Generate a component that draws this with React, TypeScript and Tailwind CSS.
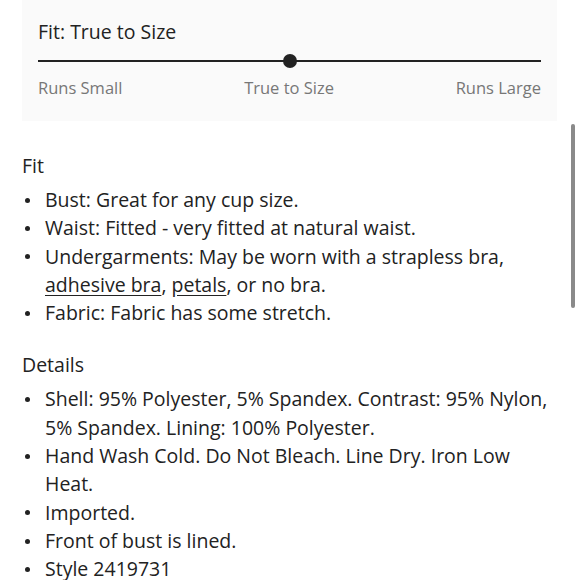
import React from 'react';

const fitItems: React.ReactNode[] = [
  'Bust: Great for any cup size.',
  'Waist: Fitted - very fitted at natural waist.',
  <>
    Undergarments: May be worn with a strapless bra,{' '}
    <span className="underline underline-offset-[3px]">adhesive bra</span>,{' '}
    <span className="underline underline-offset-[3px]">petals</span>, or no bra.
  </>,
  'Fabric: Fabric has some stretch.',
];

const detailItems: React.ReactNode[] = [
  'Shell: 95% Polyester, 5% Spandex. Contrast: 95% Nylon, 5% Spandex. Lining: 100% Polyester.',
  'Hand Wash Cold. Do Not Bleach. Line Dry. Iron Low Heat.',
  'Imported.',
  'Front of bust is lined.',
  'Style 2419731',
];

function BulletList({ items }: { items: React.ReactNode[] }) {
  return (
    <ul className="mt-[7px]">
      {items.map((item, i) => (
        <li key={i} className="flex text-[19.5px] leading-[28.3px] text-[#222]">
          <span className="flex h-[28.3px] w-[23px] shrink-0 items-center pl-[3px]">
            <span className="h-[5px] w-[5px] rounded-full bg-[#222]" />
          </span>
          <span>{item}</span>
        </li>
      ))}
    </ul>
  );
}

export default function App() {
  return (
    <div className="relative h-[580px] w-[580px] overflow-hidden bg-white font-['Open_Sans','Liberation_Sans',sans-serif]">
      <div className="mx-[22px] w-[535px] bg-[#fafafa] px-[16px] pt-[20px] pb-[22px]">
        <div className="text-[19.5px] leading-[24px] text-[#222]">Fit: True to Size</div>
        <div className="relative mt-[10px] h-[14px]">
          <div className="absolute left-0 right-0 top-[6px] h-[2px] bg-[#222]" />
          <div className="absolute left-[245px] top-0 h-[14px] w-[14px] rounded-full bg-[#222]" />
        </div>
        <div className="mt-[9px] flex justify-between text-[16.5px] leading-[22px] text-[#777]">
          <span>Runs Small</span>
          <span>True to Size</span>
          <span>Runs Large</span>
        </div>
      </div>

      <div className="pl-[22px] pr-[21px] pt-[32px]">
        <div className="text-[19.5px] leading-[26px] text-[#222]">Fit</div>
        <BulletList items={fitItems} />
        <div className="mt-[25px] text-[19.5px] leading-[26px] text-[#222]">Details</div>
        <BulletList items={detailItems} />
      </div>

      <div className="absolute right-[5px] top-[124px] h-[184px] w-[4px] rounded-full bg-[#8a8a8a]" />
    </div>
  );
}
